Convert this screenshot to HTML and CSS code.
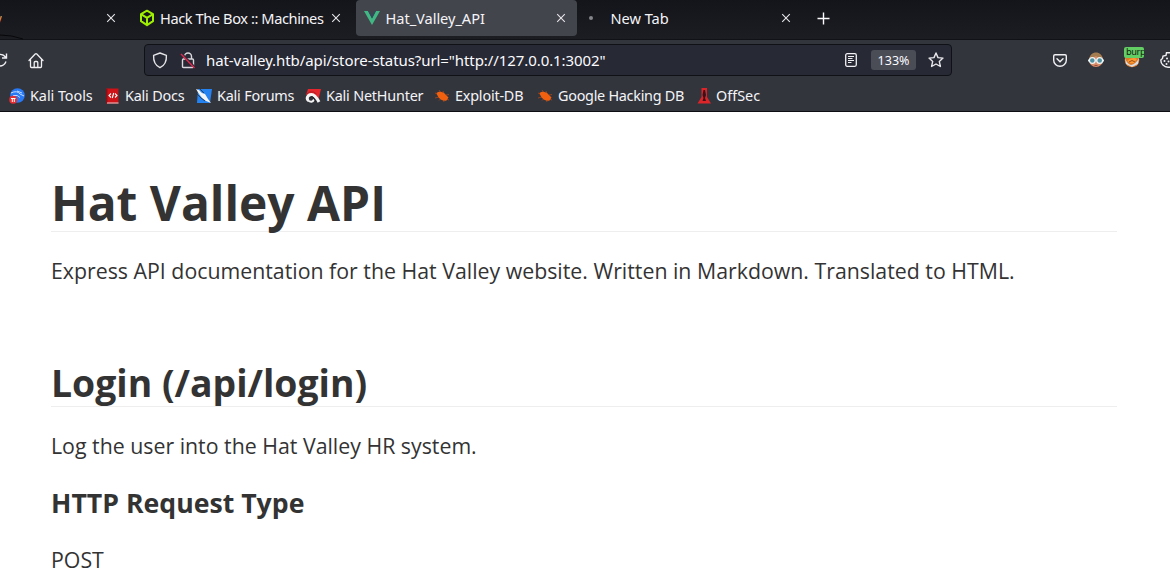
FILE: index.html
```html
<!DOCTYPE html>
<html lang="en">
<head>
<meta charset="utf-8">
<title>Hat_Valley_API</title>
<link rel="stylesheet" href="styles.css">
</head>
<body>
<svg class="defs" width="0" height="0">
  <symbol id="close" viewBox="0 0 10 10"><path d="M1.200 1.200l7.600 7.600M8.800 1.200L1.200 8.800" fill="none" stroke="#e6e6e9" stroke-width="1.1"/></symbol>
  <symbol id="bug" viewBox="0 0 16 16"><path d="M1 5l4 2M5 2l2 3M9 3l1 3M1 10l4-1M5 12.500l2-2M10 14l-1-3M12 7l3-.5M12 11l3 1" stroke="#a5461d" stroke-width=".8" fill="none"/><path d="M2.500 5C5 3 9 3.500 11.500 6.500l3 3-2 3C9 13.500 4 11 2.500 5z" fill="#f0600f"/></symbol>
</svg>
<header class="browser">
  <div class="tabs">
    <div class="tab tab-cut"><span class="cut-letter">y</span><svg class="x" width="10" height="10"><use href="#close"/></svg></div>
    <div class="tab tab-htb">
      <svg class="fav" width="16" height="18" viewBox="0 0 16 18"><path d="M8 1.700l6 3.500v7L8 16.200l-6-4v-7zM2 5.200l6 3.600 6-3.600M8 8.800v7.300" fill="none" stroke="#9fef00" stroke-width="2" stroke-linejoin="round"/></svg>
      <span class="label label-htb">Hack The Box :: Machines</span>
      <svg class="x" width="10" height="10"><use href="#close"/></svg>
    </div>
    <div class="tab tab-active">
      <svg class="fav" width="16" height="14" viewBox="0 0 16 14"><path d="M0 0h4L8 7.500 12 0h4L8 14z" fill="#41b883"/><path d="M4 0h1.500L8 4.500 10.500 0H12L8 7.500z" fill="#34495e"/></svg>
      <span class="label label-hat">Hat_Valley_API</span>
      <svg class="x" width="10" height="10"><use href="#close"/></svg>
    </div>
    <div class="tab tab-new">
      <span class="dot"></span><span class="label label-new">New Tab</span>
      <svg class="x" width="10" height="10"><use href="#close"/></svg>
    </div>
    <svg class="plus" width="13" height="13" viewBox="0 0 13 13"><path d="M6.500.5v12M.5 6.500h12" stroke="#fbfbfe" stroke-width="1.400"/></svg>
    <svg class="curve" width="24" height="6" viewBox="0 0 24 6"><path d="M0 1Q12 1 23 5" fill="none" stroke="#08080b"/></svg>
  </div>
  <div class="toolbar">
    <svg class="reload" width="8" height="16" viewBox="0 0 8 16"><path d="M-1 2.500C2 2 4 3 6 5.500M6.500 1.500v4.500H2M6 9.500C5 12.500 2 14 0 14" fill="none" stroke="#f0f0f3" stroke-width="1.400"/></svg>
    <svg class="home" width="16" height="17" viewBox="0 0 16 17"><path d="M1 8.500L7.200 2q.8-.8 1.600 0L15 8.500M2.500 7.500v7q0 1 1 1h9q1 0 1-1v-7M6.200 15v-4.500q0-1 1-1h1.600q1 0 1 1V15" fill="none" stroke="#f0f0f3" stroke-width="1.300" stroke-linejoin="round" stroke-linecap="round"/></svg>
    <div class="urlbar">
      <svg class="shield" width="16" height="17" viewBox="0 0 16 17"><path d="M8 1l6.400 2.400c.3 5.500-1.400 10-6.400 12.300C3 13.400 1.300 8.900 1.600 3.400z" fill="none" stroke="#e4e4e8" stroke-width="1.400" stroke-linejoin="round"/></svg>
      <svg class="lock" width="16" height="17" viewBox="0 0 16 17"><path d="M4.500 7V4.500a3.500 3.500 0 0 1 7 0V7M2.500 8q0-1 1-1h9q1 0 1 1v6.500q0 1-1 1h-9q-1 0-1-1z" fill="none" stroke="#d8d8dd" stroke-width="1.400"/><path d="M1.800 2l13 13.500" stroke="#272934" stroke-width="2.500"/><path d="M1 2l13.500 14" stroke="#e22850" stroke-width="1.400"/></svg>
      <span class="url">hat-valley.htb/api/store-status?url="http://127.0.0.1:3002"</span>
      <svg class="reader" width="12" height="14" viewBox="0 0 12 14"><rect x=".7" y=".7" width="10.600" height="12.600" rx="1.500" fill="none" stroke="#f0f0f3" stroke-width="1.300"/><path d="M3 3.500h6M3 5.500h4.500M3 7.500h6M3 9.500h3.500" stroke="#f0f0f3"/></svg>
      <span class="zoom">133%</span>
      <svg class="star" width="16" height="16" viewBox="0 0 16 16"><path d="M8 1l2 4.600 5 .5-3.700 3.300 1.100 5.100L8 12l-4.400 2.500 1.100-5.100L1 6.100l5-.5z" fill="none" stroke="#e8e8ec" stroke-width="1.400" stroke-linejoin="round"/></svg>
    </div>
    <div class="extensions">
      <svg width="14" height="13" viewBox="0 0 14 13"><path d="M2 .7h10q1.300 0 1.300 1.300v4.200a6.300 6.100 0 0 1-12.600 0V2Q.7.700 2 .7z" fill="none" stroke="#f0f0f3" stroke-width="1.400"/><path d="M4 4.700l3 3 3-3" fill="none" stroke="#f0f0f3" stroke-width="1.500" stroke-linecap="round"/></svg>
      <svg class="face" width="16" height="16" viewBox="0 0 16 16"><circle cx="8" cy="8" r="7" fill="#d98c68"/><path d="M1.500 7C2 3 4.500.5 8 .5S14 3 14.500 7L10 5.500 8 4 4 6z" fill="#a37c50"/><path d="M0 8.500h16" stroke="#dde8e9" stroke-width="2"/><g fill="#4f91a0" stroke="#f1f5f4" stroke-width="1.200"><circle cx="4.300" cy="8.500" r="2.900"/><circle cx="11.700" cy="8.500" r="2.900"/></g><path d="M6.500 13.500h3" stroke="#984f3d"/></svg>
      <div class="proxy">
        <svg width="16" height="16" viewBox="0 0 16 16"><circle cx="8" cy="8" r="7.300" fill="#dc7a25"/><path d="M1 6q2 6 6 7 5-1 8-7l-1 6-6 3-6-3z" fill="#d9dce1"/><path d="M3 9q5-5 10-2l-3 4H6z" fill="#ff962e"/><path d="M5 10l3-1.500L11 10" stroke="#94501d" fill="none"/></svg>
        <span class="badge">burp</span>
      </div>
      <svg class="cookie" width="10" height="16" viewBox="0 0 10 16"><path d="M10 .8H6.500L6 3.500 3 4l-.5 2.500L.8 8C.8 12 4 15.200 8 15.200h2" fill="none" stroke="#f0f0f3" stroke-width="1.400"/><g fill="#f0f0f3"><circle cx="7" cy="6.500" r="1"/><circle cx="4.500" cy="9" r="1"/><circle cx="8.500" cy="9.500" r="1"/><circle cx="6.500" cy="12" r="1"/></g></svg>
    </div>
  </div>
  <nav class="bookmarks">
    <a class="bm bm-tools"><svg width="16" height="16" viewBox="0 0 16 16"><circle cx="8.500" cy="7.500" r="7.300" fill="#2779f5"/><path d="M2 5q6-3 9 1l4 2M4 7.500q5-1 7 2M8 3l5 2" fill="none" stroke="#c4dbff"/><circle cx="4.200" cy="11.800" r="4" fill="#e52d32"/><path d="M2 10.500h4.500M3.300 10.500V14M5.300 10.500V14" stroke="#fff" fill="none"/></svg><span>Kali Tools</span></a>
    <a class="bm bm-docs"><svg width="16" height="16" viewBox="0 0 16 16"><path d="M1 .5h12.500v15H1z" fill="#cf1217"/><path d="M1 .5h1.500v15H1z" fill="#8a1018"/><path d="M2 15h11.500" stroke="#e4cfd0"/><path d="M6 5.500L4 7.500l2 2M10 5.500l2 2-2 2M8.700 5l-1.400 5" fill="none" stroke="#fff" stroke-width="1.100"/></svg><span>Kali Docs</span></a>
    <a class="bm bm-forums"><svg width="16" height="16" viewBox="0 0 16 16"><path d="M2 1h14l-2 14H1z" fill="#2483f1"/><path d="M0 1l3 1 3 3 3 1 3 5 3 4-5-2-4-3-3-4z" fill="#f2f4f6"/><path d="M0 5l5 5 4 3M4 1l4 4" stroke="#26303c" stroke-width=".8" fill="none"/></svg><span>Kali Forums</span></a>
    <a class="bm bm-net"><svg width="16" height="16" viewBox="0 0 16 16"><path d="M3 1h13l-2.500 10-5-5L1 7z" fill="#e5262c"/><path d="M3.500 12.500C1 11 2.500 6.500 6.500 6.500q3.500 0 7.500 7.500" fill="none" stroke="#f5f5f5" stroke-width="3"/><path d="M3 12.500q4 3 6-1" fill="none" stroke="#f5f5f5" stroke-width="2"/><path d="M5 10q1-2 3-1l3 5" fill="none" stroke="#24262d"/><path d="M1.500 6q3-3 7-2l3 2" fill="none" stroke="#941c22" stroke-width=".7"/></svg><span>Kali NetHunter</span></a>
    <a class="bm bm-exploit"><svg width="16" height="16"><use href="#bug"/></svg><span>Exploit-DB</span></a>
    <a class="bm bm-google"><svg width="16" height="16"><use href="#bug"/></svg><span>Google Hacking DB</span></a>
    <a class="bm bm-off"><svg width="16" height="16" viewBox="0 0 16 16"><path d="M4.500 0h5.500v9l4 6.500H.5l4-6.500z" fill="#db2528"/><path d="M6.500 2H8l1 5-1 3 1 3H5.500l1-3-1-3z" fill="#37131a"/></svg><span>OffSec</span></a>
  </nav>
</header>
<main class="doc">
  <h1><span>Hat Valley API</span></h1>
  <p class="intro">Express API documentation for the Hat Valley website. Written in Markdown. Translated to HTML.</p>
  <h2><span>Login (/api/login)</span></h2>
  <p class="login">Log the user into the Hat Valley HR system.</p>
  <h3><span>HTTP Request Type</span></h3>
  <p class="method">POST</p>
</main>
</body>
</html>
```

FILE: styles.css
```css
* { box-sizing: border-box; }
body { margin: 0; width: 1170px; height: 585px; overflow: hidden; background: #fff; font-family: "Noto Sans", sans-serif; }
svg { display: block; flex: none; overflow: hidden; }
.defs { position: absolute; }
.browser { height: 112px; background: #33353d; border-bottom: 1px solid #0d0e13; color: #fbfbfe; white-space: nowrap; }
.tabs { position: relative; display: flex; height: 40px; background: linear-gradient(#14151a, #1c1d22); border-bottom: 1px solid #111217; }
.tab { display: flex; align-items: center; height: 36px; flex: none; font-size: 14.600px; }
.tab .x { margin-left: auto; }
.tab-cut { width: 128px; padding-right: 12px; }
.cut-letter { width: 2px; overflow: hidden; direction: rtl; color: #cf8c54; }
.tab-htb { width: 228px; padding: 0 15px 0 11px; }
.fav { margin-right: 6px; }
.label { color: #f4f4f7; }
.label-htb { margin-left: -1px; letter-spacing: -.41px; }
.label-hat, .label-new { margin-left: -.5px; letter-spacing: -.04px; }
.tab-active { width: 221px; padding: 0 11px 0 8px; border-radius: 4px; background: #43454d; }
.tab-new { width: 225px; padding: 0 11px 0 12px; }
.dot { width: 4px; height: 4px; margin-right: 18px; border-radius: 50%; background: #85868c; }
.plus { margin: 12px 0 0 15px; }
.curve { position: absolute; left: 0; bottom: -1px; }
.toolbar { display: flex; align-items: center; height: 40px; }
.home { margin: 0 0 0 20px; }
.urlbar { display: flex; align-items: center; width: 808px; height: 32px; margin-left: 100px; padding: 0 7px 0 7px; border: 1px solid #101117; border-radius: 4px; background: #272934; }
.lock { margin-left: 12px; }
.url { width: 639px; margin-left: 10px; font-size: 15px; letter-spacing: -.08px; }
.zoom { width: 45px; height: 20px; margin: 0 12px 0 14px; border-radius: 3px; background: #4a4c56; font-size: 12.500px; line-height: 22px; text-align: center; }
.extensions { display: flex; align-items: center; margin-left: 101px; }
.face { margin-left: 21px; }
.proxy { position: relative; margin-left: 20px; }
.badge { position: absolute; top: -5px; left: 0; width: 20px; height: 11px; padding-left: 2px; overflow: hidden; border-radius: 2px; background: #62ce63; color: #142416; font: 9px/11px "DejaVu Sans", sans-serif; letter-spacing: -.4px; }
.cookie { margin-left: 20px; }
.bookmarks { display: flex; align-items: center; height: 31px; padding-left: 9px; font-size: 14.400px; letter-spacing: -.2px; }
.bm { display: flex; align-items: center; gap: 5px; flex: none; color: #f4f4f7; }
.bm span { margin-top: -1px; }
.bm-tools { width: 96px; letter-spacing: -.05px; }
.bm-docs { width: 91px; gap: 4px; }
.bm-forums { width: 109px; }
.bm-net { width: 129px; }
.bm-exploit { width: 103px; }
.bm-google { width: 160px; letter-spacing: -.27px; }
.bm-off { width: 70px; gap: 3px; letter-spacing: 0; }
.doc { padding: 60px 53px 0 51px; color: #333; font-family: "Open Sans", sans-serif; font-size: 21.320px; line-height: 34px; }
h1, h2, h3, p { margin: 0; font-weight: 400; white-space: nowrap; }
h1, h2, h3 { font-weight: 700; }
h1 { height: 60px; border-bottom: 1px solid #eee; font-size: 47.900px; line-height: 62px; }
.intro { margin-top: 22px; }
h2 { height: 46px; margin-top: 73px; border-bottom: 1px solid #eee; font-size: 37.333px; line-height: 44px; }
.login { margin-top: 22px; }
h3 { margin-top: 22px; height: 36px; font-size: 26.667px; line-height: 36px; }
.method { margin-top: 22px; }
```
